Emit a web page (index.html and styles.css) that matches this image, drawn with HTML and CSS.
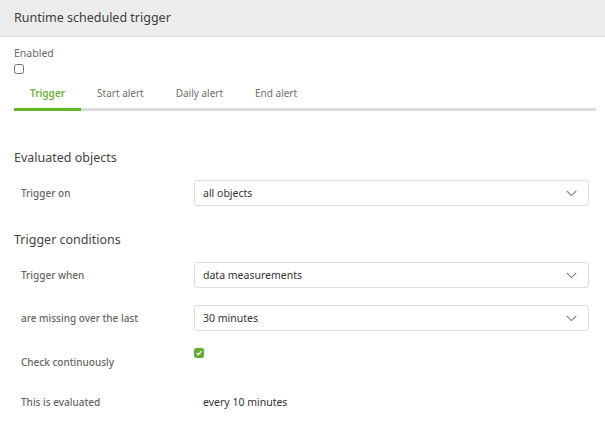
FILE: index.html
```html
<!DOCTYPE html>
<html>
<head>
<meta charset="utf-8">
<link rel="stylesheet" href="styles.css">
</head>
<body>
<div class="panel">
  <div class="header">Runtime scheduled trigger</div>
  <div class="content">
    <div class="enabled">
      <div class="enabled-label">Enabled</div>
      <span class="box"></span>
    </div>
    <div class="tabs">
      <div class="tab active">Trigger</div>
      <div class="tab">Start alert</div>
      <div class="tab">Daily alert</div>
      <div class="tab">End alert</div>
    </div>

    <div class="section-title first">Evaluated objects</div>
    <div class="row">
      <div class="label">Trigger on</div>
      <div class="select"><span>all objects</span><svg class="chev" width="11" height="7" viewBox="0 0 11 7"><path d="M0.8 1 L5.5 5.6 L10.2 1" fill="none" stroke="#808080" stroke-width="1.1"/></svg></div>
    </div>

    <div class="section-title">Trigger conditions</div>
    <div class="row">
      <div class="label">Trigger when</div>
      <div class="select"><span>data measurements</span><svg class="chev" width="11" height="7" viewBox="0 0 11 7"><path d="M0.8 1 L5.5 5.6 L10.2 1" fill="none" stroke="#808080" stroke-width="1.1"/></svg></div>
    </div>
    <div class="row">
      <div class="label">are missing over the last</div>
      <div class="select"><span>30 minutes</span><svg class="chev" width="11" height="7" viewBox="0 0 11 7"><path d="M0.8 1 L5.5 5.6 L10.2 1" fill="none" stroke="#808080" stroke-width="1.1"/></svg></div>
    </div>
    <div class="row check-row">
      <div class="label">Check continuously</div>
      <div class="control"><span class="box checked"><svg width="8" height="8" viewBox="0 0 8 8"><path d="M1.6 4.2 L3.3 5.8 L6.4 2.3" fill="none" stroke="#fff" stroke-width="1.4"/></svg></span></div>
    </div>
    <div class="row text-row">
      <div class="label">This is evaluated</div>
      <div class="value">every 10 minutes</div>
    </div>
  </div>
</div>
</body>
</html>
```
FILE: styles.css
```css
html, body {
  margin: 0;
  padding: 0;
  background: #fff;
}
body {
  font-family: "Noto Sans", "Open Sans", sans-serif;
  color: #444;
  width: 605px;
  height: 421px;
  overflow: hidden;
}
.header {
  height: 37px;
  box-sizing: border-box;
  background: #ececec;
  border-bottom: 1px solid #dcdcdc;
  padding-left: 14px;
  font-size: 12.5px;
  line-height: 36px;
  color: #3d3d3d;
}
.content {
  padding: 0 16px 0 14px;
}
.enabled {
  padding-top: 9px;
}
.enabled-label {
  font-size: 10.5px;
  line-height: 14px;
  color: #6a6a6a;
}
.box {
  display: block;
  width: 8px;
  height: 8px;
  border: 1px solid #707070;
  border-radius: 2.5px;
  margin-top: 4px;
}
.box.checked {
  margin-top: 0;
  width: 10px;
  height: 10px;
  border: none;
  background: #5eae34;
  display: flex;
  align-items: center;
  justify-content: center;
}
.tabs {
  display: flex;
  margin-top: 5px;
  margin-right: -7px;
  border-bottom: 3px solid #dcdcdc;
}
.tab {
  font-size: 10px;
  line-height: 14px;
  color: #707070;
  padding: 7px 16px 8px;
  margin-bottom: -3px;
  border-bottom: 3px solid transparent;
}
.tab.active {
  color: #6db33f;
  font-weight: 600;
  border-bottom-color: #66b52a;
}
.section-title {
  font-size: 12.5px;
  line-height: 18px;
  color: #444;
  margin-top: 25px;
  margin-bottom: 13px;
}
.section-title.first {
  margin-top: 38px;
}
.row {
  display: grid;
  grid-template-columns: 180px 1fr;
  align-items: center;
  margin-bottom: 17px;
}
.label {
  padding-left: 7px;
  font-size: 10px;
  font-weight: 500;
  color: #666;
}
.select {
  height: 26px;
  box-sizing: border-box;
  border: 1px solid #dedede;
  border-radius: 3px;
  display: flex;
  align-items: center;
  justify-content: space-between;
  padding: 0 11px 0 8px;
  font-size: 10.5px;
  color: #333;
}
.chev {
  display: block;
}
.check-row {
  align-items: start;
  margin-bottom: 21px;
}
.check-row .label {
  padding-top: 7px;
}
.control {
  height: 26px;
}
.value {
  padding-left: 9px;
  font-size: 10.5px;
  color: #333;
}
```
